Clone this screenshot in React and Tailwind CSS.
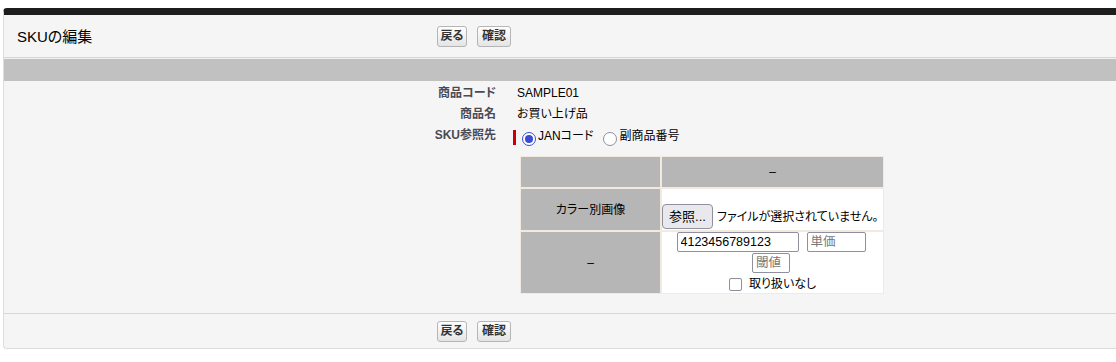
import React from 'react'

const Btn = ({ children, w }) => (
  <button
    type="button"
    className={`${w} h-[21px] text-[12px] font-bold leading-none text-[#333] border border-[#b5b5b5] rounded-[3px] bg-linear-to-b from-white to-[#e4e4e4]`}
  >
    {children}
  </button>
)

const Buttons = () => (
  <div className="flex gap-[10px]">
    <Btn w="w-[30px]">戻る</Btn>
    <Btn w="w-[34px]">確認</Btn>
  </div>
)

const Radio = ({ checked }) =>
  checked ? (
    <span className="shrink-0 w-[14px] h-[14px] rounded-full border-[1.5px] border-[#3b4bd3] bg-white flex items-center justify-center">
      <span className="block w-[8px] h-[8px] rounded-full bg-[#3b4bd3]" />
    </span>
  ) : (
    <span className="shrink-0 block w-[14px] h-[14px] rounded-full border-[1.5px] border-[#8f8f9d] bg-white" />
  )

const Field = ({ value, placeholder, w }) => (
  <input
    readOnly
    value={value}
    placeholder={placeholder}
    className={`${w} h-[20px] px-[3px] text-[12.5px] text-black placeholder:text-[#777] bg-white border border-[#8f8f9d] rounded-[2px] outline-none`}
  />
)

export default function App() {
  return (
    <div className="w-full overflow-hidden bg-white pt-[8px] pl-[3px] text-black font-['Liberation_Sans','Noto_Sans_CJK_JP',sans-serif] [font-feature-settings:'palt']">
      <div className="w-[1140px] bg-[#f5f5f5] border-t-[7px] border-t-[#1d1d1d] border-l border-l-[#dcdcdc] border-b border-b-[#dcdcdc] rounded-tl-[4px] rounded-bl-[4px]">
        {/* title bar */}
        <div className="h-[43px] flex items-center border-b border-[#d6d6d6]">
          <h2 className="w-[433px] pl-[13px] text-[15px] leading-none">SKUの編集</h2>
          <Buttons />
        </div>
        <div className="h-[1px] bg-[#f0f0f0]" />
        <div className="h-[22px] bg-[#c1c1c1]" />

        {/* detail */}
        <div className="pt-[2px] pb-[19px] grid grid-cols-[503px_1fr] text-[12px]">
          <div className="h-[21px] leading-[21px] pr-[11px] text-right font-bold text-[#4a4a56]">商品コード</div>
          <div className="h-[21px] leading-[21px] pl-[10px]">SAMPLE01</div>

          <div className="h-[21px] leading-[21px] pr-[11px] text-right font-bold text-[#4a4a56]">商品名</div>
          <div className="h-[21px] leading-[21px] pl-[10px]">お買い上げ品</div>

          <div className="h-[22px] leading-[21px] pr-[11px] text-right font-bold text-[#4a4a56]">SKU参照先</div>
          <div className="h-[22px] pl-[6px] flex items-start">
            <span className="mt-[5px] w-[3px] h-[15px] bg-[#c00]" />
            <span className="mt-[7px] ml-[6px]"><Radio checked /></span>
            <span className="mt-[4px] ml-[2px] leading-[14px]">JANコード</span>
            <span className="mt-[7px] ml-[10px]"><Radio /></span>
            <span className="mt-[4px] ml-[2px] leading-[14px]">副商品番号</span>
          </div>

          <div />
          <div className="pl-[13px] pt-[9px]">
            <table className="w-[364px] border-separate border-spacing-0 text-[12px]">
              <tbody>
                <tr className="h-[32px]">
                  <td className="w-[141px] bg-[#b6b6b6] border border-[#f3eadf]" />
                  <td className="bg-[#b6b6b6] border border-[#f3eadf] text-center align-middle">–</td>
                </tr>
                <tr className="h-[43px]">
                  <td className="w-[141px] bg-[#b6b6b6] border border-[#f3eadf] text-center align-middle">カラー別画像</td>
                  <td className="bg-white border border-[#f3eadf] align-bottom pb-[1px]">
                    <div className="flex items-center whitespace-nowrap">
                      <button
                        type="button"
                        className="h-[25px] w-[51px] text-[13px] leading-none bg-[#e9e9ed] border border-[#8f8f9d] rounded-[4px]"
                      >
                        参照...
                      </button>
                      <span className="ml-[4px] text-[12px]">ファイルが選択されていません。</span>
                    </div>
                  </td>
                </tr>
                <tr className="h-[63px]">
                  <td className="w-[141px] bg-[#b6b6b6] border border-[#f3eadf] text-center align-middle">–</td>
                  <td className="bg-white border border-[#f3eadf] align-top">
                    <div className="flex flex-col items-center">
                      <div className="flex gap-[8px] pr-[3px]">
                        <Field value="4123456789123" w="w-[122px]" />
                        <Field value="" placeholder="単価" w="w-[59px]" />
                      </div>
                      <div className="mt-[1px] pr-[3px]">
                        <Field value="" placeholder="閾値" w="w-[38px]" />
                      </div>
                      <div className="mt-[2px] flex items-center gap-[7px] h-[18px]">
                        <span className="w-[13px] h-[13px] border border-[#8f8f9d] rounded-[2px] bg-white" />
                        <span>取り扱いなし</span>
                      </div>
                    </div>
                  </td>
                </tr>
              </tbody>
            </table>
          </div>
        </div>

        {/* bottom buttons */}
        <div className="h-[35px] flex items-center border-t border-[#d8d8d8]">
          <div className="w-[433px]" />
          <Buttons />
        </div>
      </div>
    </div>
  )
}
